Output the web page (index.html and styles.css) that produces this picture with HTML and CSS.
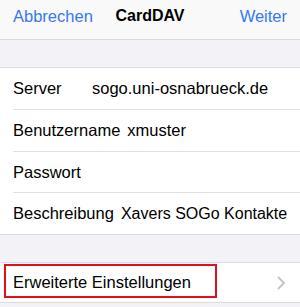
FILE: index.html
```html
<!DOCTYPE html>
<html lang="de">
<head>
<meta charset="utf-8">
<link rel="stylesheet" href="styles.css">
</head>
<body>
<header class="navbar">
  <span class="nav-btn left">Abbrechen</span>
  <span class="nav-title">CardDAV</span>
  <span class="nav-btn right">Weiter</span>
</header>
<div class="spacer"></div>
<section class="group">
  <div class="row r1"><span class="label">Server</span><span class="value">sogo.uni-osnabrueck.de</span></div>
  <div class="row r2"><span class="label">Benutzername</span><span class="value">xmuster</span></div>
  <div class="row r3"><span class="label">Passwort</span><span class="value"></span></div>
  <div class="row r4 last"><span class="label">Beschreibung</span><span class="value narrow">Xavers SOGo Kontakte</span></div>
</section>
<div class="spacer"></div>
<section class="group">
  <div class="row link last">
    <span class="label">Erweiterte Einstellungen</span>
    <svg class="chevron" width="9" height="14" viewBox="0 0 9 14"><path d="M1.5 1.5 L7 7 L1.5 12.5" fill="none" stroke="#c4c4c7" stroke-width="1.8" stroke-linecap="round" stroke-linejoin="round"/></svg>
    <span class="highlight"></span>
  </div>
</section>
</body>
</html>
```
FILE: styles.css
```css
html, body {
  margin: 0;
  padding: 0;
}
body {
  background: #f2f2f7;
  font-family: "Liberation Sans", Arial, sans-serif;
  font-size: 16.5px;
  color: #000;
  width: 300px;
  height: 307px;
  overflow: hidden;
}
.navbar {
  box-sizing: border-box;
  height: 40px;
  background: #f9f9f9;
  border-bottom: 1px solid #d9d9dc;
  display: grid;
  grid-template-columns: 1fr auto 1fr;
  align-items: start;
  padding: 6px 13px 0 13px;
  line-height: 20px;
}
.nav-btn {
  color: #3478f6;
  font-size: 16.5px;
}
.nav-btn.right {
  justify-self: end;
}
.nav-title {
  font-weight: bold;
  font-size: 16px;
}
.spacer {
  height: 27px;
}
.group {
  background: #fff;
  border-top: 1px solid #dcdce0;
  border-bottom: 1px solid #dcdce0;
}
.row {
  position: relative;
  display: flex;
  align-items: center;
  height: 41px;
  margin-left: 13px;
  border-bottom: 1px solid #e0e0e4;
}
.row.r3 {
  height: 40px;
}
.row.last {
  border-bottom: none;
}
.label {
  min-width: 72px;
  margin-right: 7px;
  white-space: nowrap;
}
.value {
  white-space: nowrap;
}
.value.narrow {
  font-size: 16px;
}
.link {
  height: 39px;
  justify-content: space-between;
  padding-right: 14px;
}
.chevron {
  display: block;
}
.highlight {
  position: absolute;
  left: -9px;
  top: 1px;
  width: 213px;
  height: 34px;
  box-sizing: border-box;
  border: 2px solid #e3101c;
}
```
